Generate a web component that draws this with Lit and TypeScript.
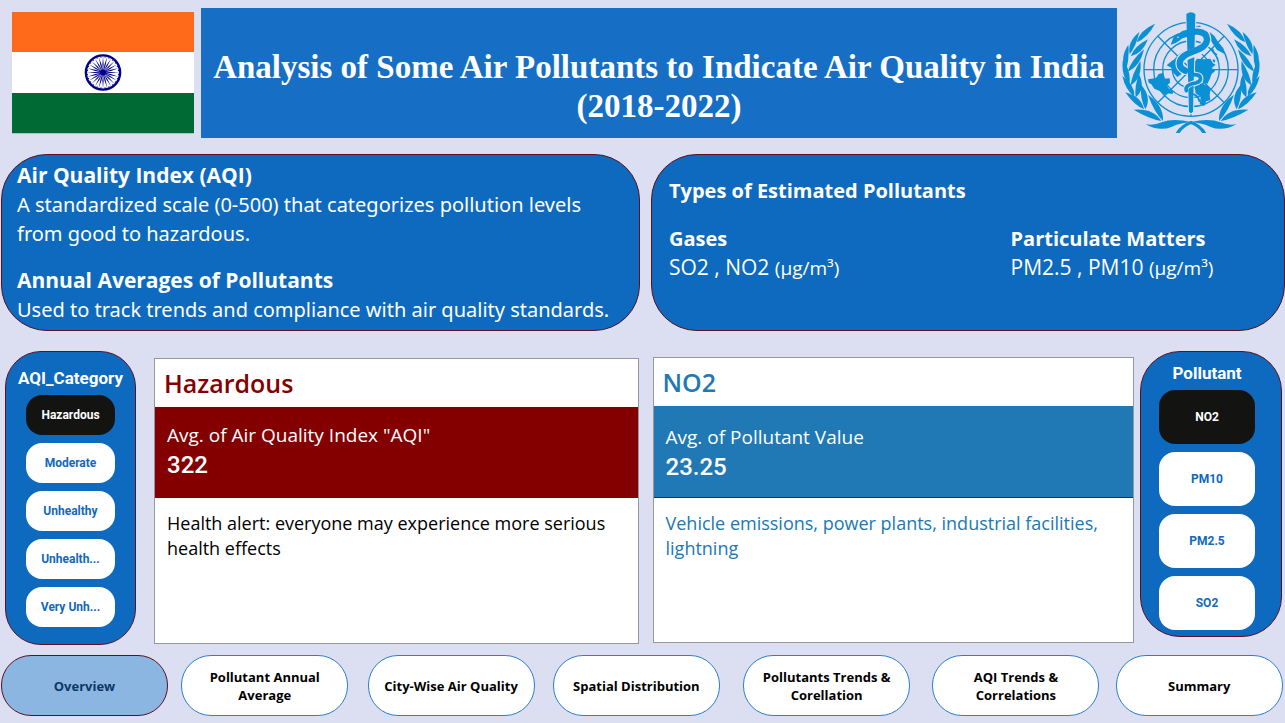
import { LitElement, html, svg, css } from "lit";
import { customElement, state } from "lit/decorators.js";
import { classMap } from "lit/directives/class-map.js";

@customElement("india-flag")
class IndiaFlag extends LitElement {
  static styles = css`
    :host { display: block; }
    .flag { display: block; width: 100%; }
  `;
  render() {
    const spokes = Array.from({ length: 24 }, (_, i) => i * 15);
    return html`<svg class="flag" viewBox="0 0 182 122" role="img" aria-label="Flag of India">
      <rect width="182" height="122" fill="#fff" />
      <rect width="182" height="40" fill="#ff6a1a" />
      <rect y="81" width="182" height="40" fill="#006a35" />
      <rect y="121" width="182" height="1" fill="#a9c5be" />
      <g transform="translate(91 60.5)">
        <circle r="17.1" fill="none" stroke="#00008b" stroke-width="2.4" />
        ${spokes.map((a) => svg`<path d="M0 -16 L0.6 -8 L0.15 0 L-0.15 0 L-0.6 -8Z" fill="#00008b" transform="rotate(${a})" />`)}
        ${spokes.map((a) => svg`<circle r=".6" cx="15.6" fill="#00008b" transform="rotate(${a + 7.5})" />`)}
        <circle r="3" fill="#00008b" />
      </g>
    </svg>`;
  }
}

type Leaf = [number, number, number, number, number, number];

/* base x/y, tip x/y, bulge on each side of the axis */
const LEAVES: Leaf[] = [
  [97, 127, 152, 71, 19, 14],
  [76, 163, 105, 96, 22, 8],
  [79, 169, 131, 118, 14, 19],
  [66, 207, 72, 134, 24, 7],
  [70, 215, 119, 148, 12, 21],
  [75, 252, 56, 178, 19, 15],
  [79, 256, 108, 183, 9, 25],
  [90, 290, 54, 228, 13, 20],
  [94, 292, 104, 222, 9, 27],
  [119, 328, 63, 277, 11, 23],
  [123, 328, 109, 253, 10, 27],
  [171, 363, 88, 329, 8, 27],
  [176, 363, 131, 284, 10, 25],
];

function leafPath([bx, by, tx, ty, l, r]: Leaf): string {
  const dx = tx - bx, dy = ty - by, n = Math.hypot(dx, dy);
  const ux = dy / n, uy = -dx / n;
  const mx = bx + dx * 0.42, my = by + dy * 0.42;
  return `M${bx} ${by} Q${mx + ux * l} ${my + uy * l} ${tx} ${ty} Q${mx - ux * r} ${my - uy * r} ${bx} ${by}Z`;
}

@customElement("who-emblem")
class WhoEmblem extends LitElement {
  static styles = css`
    :host { display: block; }
    .emblem { display: block; width: 100%; }
    .ink { fill: #0a90d4; }
    .line { fill: none; stroke: #0a90d4; stroke-width: 4; }
    .halo { fill: none; stroke: #dcdef2; stroke-linecap: round; }
    .snake { fill: none; stroke: #0a90d4; stroke-linecap: round; }
    .paper { fill: #dcdef2; stroke: #dcdef2; stroke-width: 7; }
  `;
  render() {
    const branch = () => svg`
      ${LEAVES.map((l) => svg`<path class="ink" d=${leafPath(l)} />`)}
      <path class="ink" d="M124 373 Q150 377 172 367 Q205 354 260 366 Q225 370 203 380 Q165 396 124 373Z" />
      <path class="ink" d="M262 363 Q232 370 214 399 L226 399 Q240 378 268 370Z" />`;
    return html`<svg class="emblem" viewBox="50 33 420 372" role="img" aria-label="World Health Organization emblem">
      <circle class="line" cx="260" cy="208" r="141" />
      <circle class="line" cx="260" cy="208" r="112" />
      <circle class="line" cx="260" cy="208" r="85" />
      <circle class="line" cx="260" cy="208" r="56" />
      <path class="line" d="M119 209H401M160 108L360 308M360 108L160 308M260 68V350" />
      <path class="ink" d="M131 238 L155 234 L163 222 L176 219 L179 236 L196 235 L197 249 L187 255 L194 266 L208 275 L204 282 L189 280 L181 284 L168 274 L150 266 L141 253 L133 248Z" />
      <path class="ink" d="M187 196 L206 180 L218 177 L220 200 L232 222 L219 231 L207 218 L201 203Z" />
      <path class="ink" d="M278 176 L300 178 L318 176 L326 190 L334 194 L322 204 L333 212 L322 222 L316 238 L309 252 L298 246 L284 222 L272 214 L268 190Z" />
      <path class="ink" d="M270 256 L290 250 L310 257 L318 268 L316 286 L318 300 L306 304 L299 318 L286 312 L289 291 L274 280Z" />
      <path class="ink" d="M316 96 L330 108 L341 125 L357 145 L364 164 L350 156 L338 150 L326 132 L318 118Z" />
      <path class="ink" d="M318 148 l8 -3 l5 12 l8 6 l-4 6 l-9 -9z M336 168 l5 4 l2 10 l-5 -1z M272 78 l16 -1 l1 5 l-15 3z M326 178 l7 2 l-2 8 l-6 -4z" />
      <path class="halo" stroke-width="26" d="M238 102 C258 92 306 84 308 118 C308 158 228 150 226 190 C226 202 232 208 243 212" />
      <path class="halo" stroke-width="18" d="M270 224 C294 224 294 244 274 249 C252 253 242 260 246 272" />
      <path class="paper" d="M247 42 Q260 32 273 42 L265 336 Q260 344 255 336Z" />
      <path class="ink" d="M246 42 Q260 31 273 42 L266 334 Q260 346 254 334Z" />
      <path class="halo" stroke-width="26" stroke-linecap="butt" d="M296 146 C276 160 244 162 232 178" />
      <path class="snake" stroke-width="19" d="M238 102 C258 94 306 86 308 118 C308 158 228 150 226 190 C226 202 232 208 243 212" />
      <path class="halo" stroke-width="16" d="M286 240 C280 248 258 250 250 258" />
      <path class="snake" stroke-width="11" d="M270 224 C294 224 294 244 274 249 C252 253 242 260 246 272" />
      <path class="snake" stroke-width="6" d="M269 283 Q282 288 285 303" />
      <path class="ink" d="M246 92 L250 110 Q232 113 225 122 Q214 131 199 134 Q203 125 206 115 Q215 98 246 92Z" />
      <circle cx="221" cy="112" r="2.5" fill="#dcdef2" />
      ${branch()}
      <g transform="translate(520 0) scale(-1 1)">${branch()}</g>
    </svg>`;
  }
}

@customElement("slicer-panel")
class SlicerPanel extends LitElement {
  static properties = {
    heading: {},
    items: { attribute: false },
    tall: { type: Boolean, reflect: true },
    selected: { state: true },
  };
  declare heading: string;
  declare items: string[];
  declare tall: boolean;
  declare selected: number;
  constructor() {
    super();
    this.heading = "";
    this.items = [];
    this.tall = false;
    this.selected = 0;
  }
  static styles = css`
    :host { display: block; }
    .panel {
      box-sizing: border-box;
      display: flex;
      flex-direction: column;
      align-items: center;
      gap: 8px;
      padding: 17px 8px;
      border: 1px solid #5c1020;
      border-radius: 36px;
      background: #0e6abf;
      font-family: Roboto, "Liberation Sans", sans-serif;
    }
    .title { margin: 0; font-size: 17px; line-height: 18px; font-weight: 700; color: #fff; }
    .option {
      width: 89px;
      height: 40px;
      padding: 0;
      border: 0;
      border-radius: 16px;
      background: #fff;
      color: #1168be;
      font: 700 12px/16px Roboto, "Liberation Sans", sans-serif;
      cursor: pointer;
    }
    .on { background: #131411; color: #fff; }
    :host([tall]) .panel { padding: 12px 16px 6px 8px; border-radius: 40px; }
    :host([tall]) .option { width: 96px; height: 54px; }
  `;
  render() {
    return html`<section class="panel" aria-label=${this.heading}>
      <h2 class="title">${this.heading}</h2>
      ${this.items.map((t, i) => html`<button
        class=${classMap({ option: true, on: i === this.selected })}
        aria-pressed=${i === this.selected ? "true" : "false"}
        @click=${() => (this.selected = i)}>${t}</button>`)}
    </section>`;
  }
}

@customElement("app-root")
class AppRoot extends LitElement {
  @state() page = 0;

  static styles = css`
    :host {
      display: block;
      min-height: 100vh;
      background: #dcdef2;
      font-family: "Open Sans", "Noto Sans", sans-serif;
      color: #000;
    }
    h1, h2, h3, p { margin: 0; }
    .header { display: flex; align-items: flex-start; padding: 8px 24px 0 12px; }
    .flag { width: 182px; margin: 4px 7px 0 0; }
    .emblem { width: 140px; margin: 3px 0 0 4px; }
    .banner {
      flex: 1;
      box-sizing: border-box;
      min-height: 130px;
      padding: 40px 8px 12px;
      background: #166fc4;
      color: #fff;
      text-align: center;
      font: 700 33px/39px "Liberation Serif", serif;
    }
    .info { display: grid; grid-template-columns: 639fr 634fr; gap: 11px; padding: 16px 0 0 1px; }
    .box {
      box-sizing: border-box;
      min-height: 177px;
      border: 1px solid #5c1020;
      border-radius: 46px;
      background: #0e6abf;
      color: #fff;
      font-size: 21px;
      line-height: 29px;
    }
    .about { padding: 5px 4px 0 15px; }
    .about p { font-family: "Noto Sans", "Open Sans", sans-serif; font-size: 20px; }
    .about p + h2 { margin-top: 17px; }
    .types { padding: 21px 17px 0; }
    .box h2, .box h3 { font-size: 21px; line-height: 30px; font-weight: 700; }
    .types h2, .types h3 { font-size: 20px; line-height: 29px; }
    .unit { font-size: 19px; }
    .groups { display: grid; grid-template-columns: 341fr 256fr; padding-top: 19px; }
    .main {
      display: grid;
      grid-template-columns: 131px 484fr 483fr 142px;
      align-items: start;
      padding: 20px 3px 0 5px;
    }
    .card {
      box-sizing: border-box;
      min-height: 286px;
      margin-top: 7px;
      border: 1px solid #97979f;
      background: #fff;
    }
    .alert { margin-left: 18px; }
    .source { margin: 6px 6px 0 14px; }
    .name { padding: 6px 9px 6px; font-size: 25px; line-height: 36px; font-weight: 600; }
    .metric {
      box-sizing: border-box;
      min-height: 91px;
      padding: 14px 12px;
      color: #fff;
      font-size: 19px;
      line-height: 28px;
    }
    .value { font: 500 24px/32px Roboto, sans-serif; }
    .note { padding: 13px 12px; font-size: 18px; line-height: 25px; }
    .alert .name { color: #840000; }
    .alert .metric { background: #840000; }
    .source .name, .source .note { color: #2078b5; }
    .source .metric { padding-top: 17px; background: #2078b5; border-bottom: 1px solid #15364e; }
    .nav {
      display: grid;
      grid-template-columns: 180fr 186fr 185fr 190fr 189fr 183fr 168fr;
      padding: 10px 1px 6px;
    }
    .tab {
      box-sizing: border-box;
      width: 167px;
      height: 61px;
      padding: 0 12px;
      border: 1px solid #2a7fd0;
      border-radius: 30px;
      background: #fff;
      color: #000;
      font: 700 13px/18px "Open Sans", "Noto Sans", sans-serif;
      cursor: pointer;
    }
    .current { background: #8bb6e1; border-color: #5c1020; color: #0d3768; }
  `;

  render() {
    const tabs = ["Overview", "Pollutant Annual Average", "City-Wise Air Quality", "Spatial Distribution",
      "Pollutants Trends & Corellation", "AQI Trends & Correlations", "Summary"];
    return html`
      <header class="header">
        <india-flag class="flag"></india-flag>
        <h1 class="banner">Analysis of Some Air Pollutants to Indicate Air Quality in India<br />(2018-2022)</h1>
        <who-emblem class="emblem"></who-emblem>
      </header>
      <section class="info">
        <div class="box about">
          <h2>Air Quality Index (AQI)</h2>
          <p>A standardized scale (0-500) that categorizes pollution levels<br />from good to hazardous.</p>
          <h2>Annual Averages of Pollutants</h2>
          <p>Used to track trends and compliance with air quality standards.</p>
        </div>
        <div class="box types">
          <h2>Types of Estimated Pollutants</h2>
          <div class="groups">
            <div><h3>Gases</h3><p>SO2 , NO2 <span class="unit">(µg/m³)</span></p></div>
            <div><h3>Particulate Matters</h3><p>PM2.5 , PM10 <span class="unit">(µg/m³)</span></p></div>
          </div>
        </div>
      </section>
      <main class="main">
        <slicer-panel heading="AQI_Category"
          .items=${["Hazardous", "Moderate", "Unhealthy", "Unhealth...", "Very Unh..."]}></slicer-panel>
        <article class="card alert">
          <h2 class="name">Hazardous</h2>
          <div class="metric"><p>Avg. of Air Quality Index "AQI"</p><p class="value">322</p></div>
          <p class="note">Health alert: everyone may experience more serious health effects</p>
        </article>
        <article class="card source">
          <h2 class="name">NO2</h2>
          <div class="metric"><p>Avg. of Pollutant Value</p><p class="value">23.25</p></div>
          <p class="note">Vehicle emissions, power plants, industrial facilities, lightning</p>
        </article>
        <slicer-panel tall heading="Pollutant" .items=${["NO2", "PM10", "PM2.5", "SO2"]}></slicer-panel>
      </main>
      <nav class="nav" aria-label="Report pages">
        ${tabs.map((t, i) => html`<button class=${classMap({ tab: true, current: i === this.page })}
          aria-current=${i === this.page ? "page" : "false"}
          @click=${() => (this.page = i)}>${t}</button>`)}
      </nav>`;
  }
}
